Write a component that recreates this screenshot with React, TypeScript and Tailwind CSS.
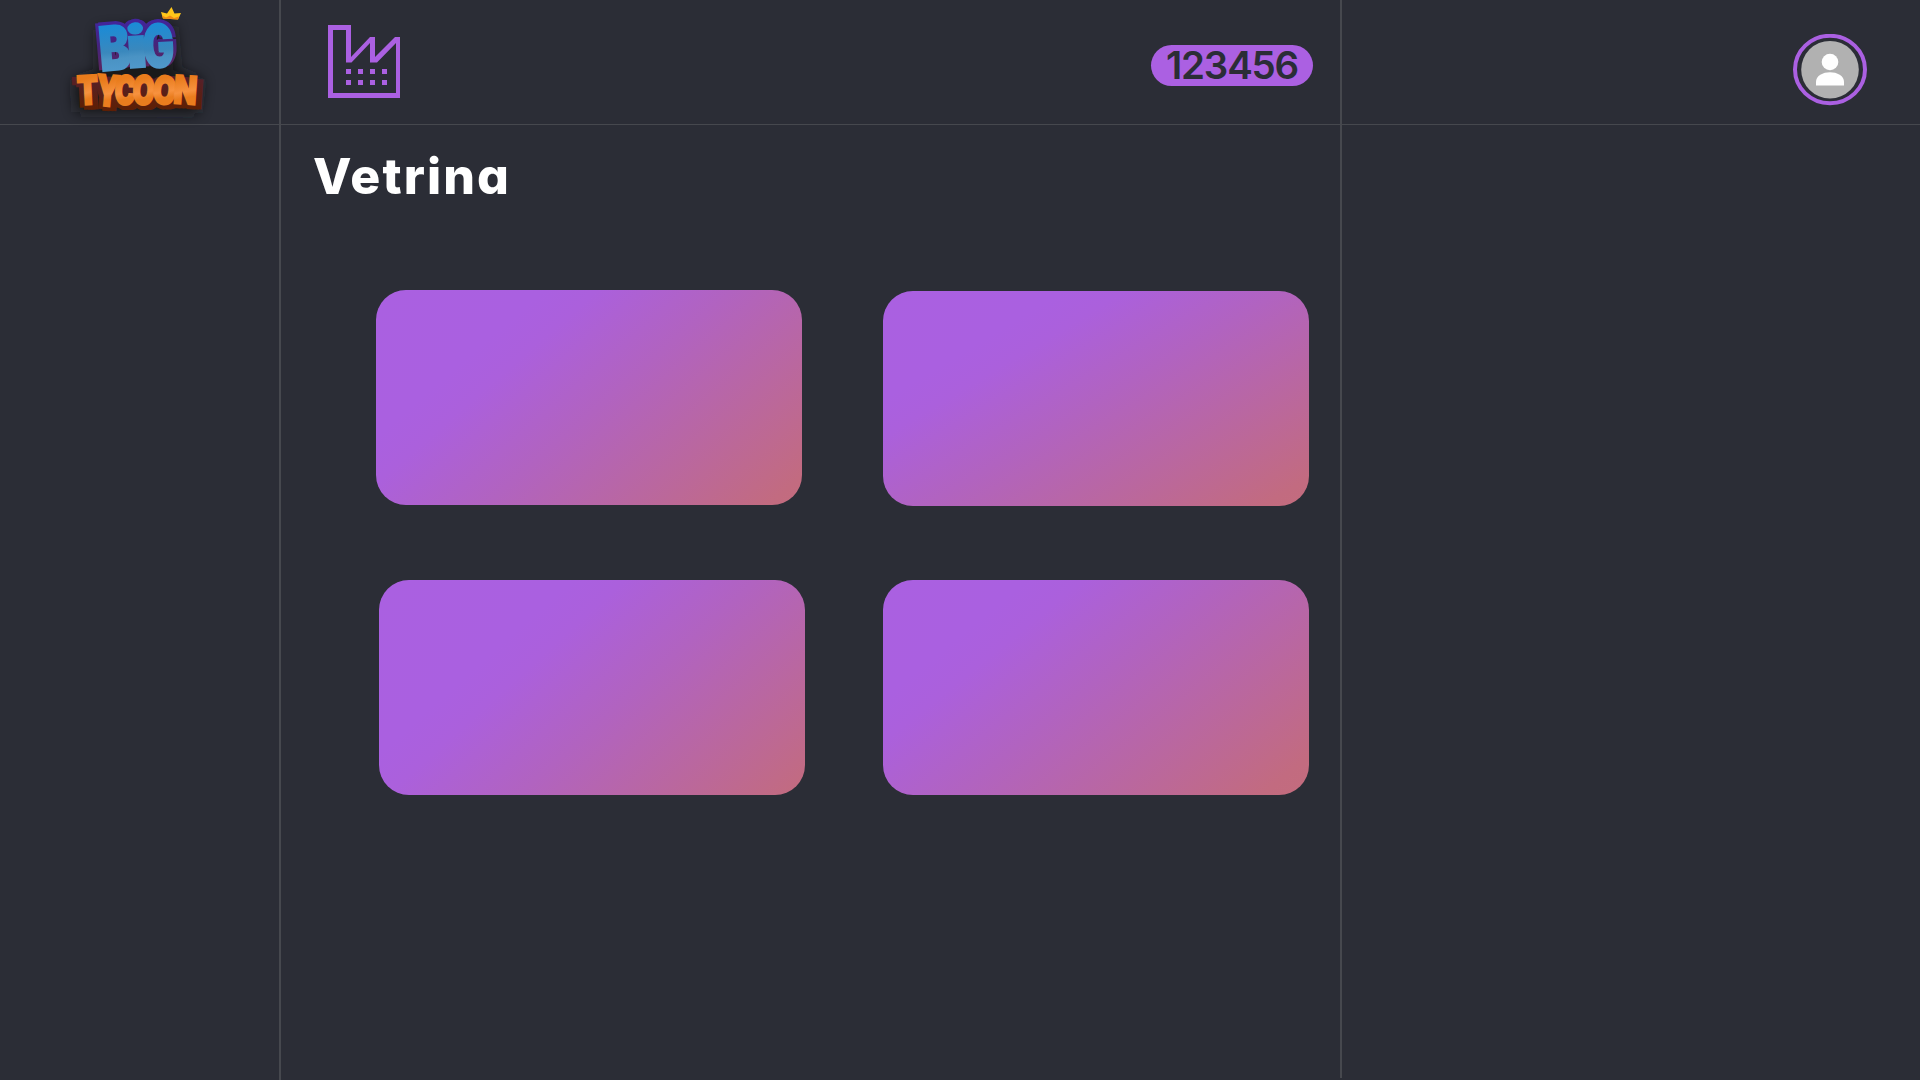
type Glyph = { c: string; x: number; y: number; w: number; h: number; r: number };

const BIG: Glyph[] = [
  { c: "B", x: 101, y: 71, w: 31, h: 44, r: -5 },
  { c: "i", x: 128, y: 68, w: 20, h: 41, r: -4 },
  { c: "G", x: 144, y: 68, w: 31, h: 43, r: -3 },
];

const TYCOON: Glyph[] = [
  { c: "T", x: 78, y: 105, w: 21, h: 29, r: -3 },
  { c: "Y", x: 95, y: 105, w: 23, h: 31, r: 5 },
  { c: "C", x: 114, y: 104, w: 21, h: 29, r: 3 },
  { c: "O", x: 132, y: 104, w: 22, h: 29, r: 3 },
  { c: "O", x: 152, y: 103, w: 23, h: 28, r: 5 },
  { c: "N", x: 173, y: 103, w: 23, h: 28, r: 4 },
];

type WordProps = { glyphs: Glyph[]; paint: string; weight?: number; dx?: number; dy?: number };

function Word({ glyphs, paint, weight = 2, dx = 0, dy = 0 }: WordProps) {
  return (
    <g fontFamily="Inter, sans-serif" fontWeight={900} fill={paint} stroke={paint} strokeWidth={weight}>
      {glyphs.map((g, i) => (
        <text
          key={i}
          transform={`translate(${g.x + dx} ${g.y + dy}) rotate(${g.r})`}
          fontSize={g.h / 0.727}
          textLength={g.w}
          lengthAdjust="spacingAndGlyphs"
        >
          {g.c}
        </text>
      ))}
    </g>
  );
}

function Logo() {
  return (
    <svg width="279" height="124" viewBox="0 0 279 124" className="block overflow-visible">
      <defs>
        <linearGradient id="blue" gradientUnits="userSpaceOnUse" x1="0" y1="-44" x2="0" y2="0">
          <stop offset="0" stopColor="#1b8bd6" />
          <stop offset="0.6" stopColor="#3a88bd" />
          <stop offset="0.75" stopColor="#4a93c4" />
          <stop offset="1" stopColor="#4f98ca" />
        </linearGradient>
        <linearGradient id="violet" gradientUnits="userSpaceOnUse" x1="0" y1="-44" x2="0" y2="0">
          <stop offset="0" stopColor="#42259a" />
          <stop offset="0.5" stopColor="#45247c" />
          <stop offset="1" stopColor="#5a2560" />
        </linearGradient>
        <linearGradient id="orange" gradientUnits="userSpaceOnUse" x1="0" y1="-30" x2="8" y2="0">
          <stop offset="0.2" stopColor="#e97c1c" />
          <stop offset="0.65" stopColor="#f7923f" />
          <stop offset="0.85" stopColor="#ea7d1e" />
        </linearGradient>
        <linearGradient id="brown" gradientUnits="userSpaceOnUse" x1="0" y1="-30" x2="0" y2="0">
          <stop offset="0" stopColor="#56202a" />
          <stop offset="1" stopColor="#5e1f05" />
        </linearGradient>
        <filter id="glow" x="-30%" y="-30%" width="160%" height="160%">
          <feGaussianBlur stdDeviation="7" />
        </filter>
      </defs>
      <path
        d="M98 30L174 26L178 70L202 80L198 113L76 112L74 80L98 72Z"
        fill="#121418"
        opacity="0.85"
        filter="url(#glow)"
      />
      <Word glyphs={BIG} paint="url(#violet)" weight={3} dx={-3} dy={-2} />
      <Word glyphs={BIG} paint="url(#violet)" weight={3} dy={-3} />
      <Word glyphs={BIG} paint="url(#violet)" weight={3} dx={3} dy={-2} />
      <Word glyphs={BIG} paint="url(#blue)" weight={2.2} />
      <Word glyphs={TYCOON} paint="url(#brown)" dx={-5} dy={2} />
      <Word glyphs={TYCOON} paint="url(#brown)" dx={-1} dy={4} />
      <Word glyphs={TYCOON} paint="url(#brown)" dx={3} dy={4} />
      <Word glyphs={TYCOON} paint="url(#brown)" dx={6} dy={4} />
      <Word glyphs={TYCOON} paint="url(#orange)" weight={2.2} />
      <path d="M161 12L167 13.5L171.5 7L174.5 13.5L181 13L178 19.5L163 18.5Z" fill="#ffc61a" />
      <path d="M162 15.5L166 17.5L170 15.5L174 18L179 16.5L178 19.5L163 18.5Z" fill="#f08a16" />
    </svg>
  );
}

function FactoryIcon() {
  return (
    <svg width="72" height="73" viewBox="0 0 72 73" className="block" fill="#ab60e2">
      <path
        fillRule="evenodd"
        d="M0 0H23V32L42 12H47V32L67 12H72V73H0ZM5 5V68H68V18L49 37.5H42V18L23.5 37.5H18V5Z"
      />
      {[18, 30, 42, 54].map((x) => (
        <g key={x}>
          <rect x={x} y={44} width={5} height={5} />
          <rect x={x} y={55} width={5} height={5} />
        </g>
      ))}
    </svg>
  );
}

function Avatar() {
  return (
    <svg width="74" height="72" viewBox="0 0 74 72" className="block">
      <ellipse cx="37" cy="35.5" rx="35" ry="33.7" fill="none" stroke="#ab60e2" strokeWidth="4" />
      <circle cx="37" cy="35.7" r="28.8" fill="#b1b1b1" />
      <circle cx="37" cy="28" r="8.3" fill="#fff" />
      <path d="M23 51.5V48C23 41.5 30 38.2 37 38.2S51 41.5 51 48V51.5Z" fill="#fff" />
    </svg>
  );
}

const card = "h-[215px] w-[426px] rounded-[30px]";

export default function App() {
  return (
    <div className="flex h-[1080px] w-[1920px] flex-col overflow-hidden bg-[#2b2d36] font-[Inter,sans-serif]">
      <header className="flex h-[125px] shrink-0 border-b border-[#46484e]">
        <div className="w-[281px] border-r-2 border-[#46484e]">
          <Logo />
        </div>
        <div className="flex w-[1061px] items-start justify-between border-r-2 border-[#46484e] pr-[27px] pl-[47px]">
          <div className="pt-[25px]">
            <FactoryIcon />
          </div>
          <div className="mt-[45px] flex h-[41px] w-[162px] items-center justify-center rounded-full bg-[#ab60e2]">
            <span className="text-[38.5px] leading-none font-semibold tracking-[-1.2px] text-[#2b2d36]">123456</span>
          </div>
        </div>
        <div className="flex flex-1 justify-end pt-[34px] pr-[53px]">
          <Avatar />
        </div>
      </header>
      <div className="flex flex-1">
        <aside className="w-[281px] border-r-2 border-[#46484e]" />
        <main className="mb-[2px] w-[1061px] border-r-2 border-[#46484e]">
          <h1 className="pt-[21px] pb-px pl-[32px] text-[50px] leading-[60px] font-extrabold tracking-[2.1px] text-white [font-feature-settings:'cv11']">
            Vetrina
          </h1>
          <section className="flex flex-col gap-[74px] pt-[83px]">
            <div className="flex gap-[81px] pl-[95px]">
              <div className={`${card} bg-[linear-gradient(139deg,#aa60e1_0%,#aa60e0_25%,#ab60dc_33%,#b163c0_53%,#c26b80_95%,#c36c7d_100%)]`} />
              <div className={`${card} mt-px bg-[linear-gradient(149deg,#aa60e1_0%,#aa60e0_23%,#ab60dc_31%,#b163c0_51%,#c26b80_94%,#c36c7d_100%)]`} />
            </div>
            <div className="flex gap-[78px] pl-[98px]">
              <div className={`${card} bg-[linear-gradient(138deg,#aa60e1_0%,#aa60e0_29%,#ab60dc_37%,#b163c0_57%,#c26b80_98%,#c36c7d_100%)]`} />
              <div className={`${card} bg-[linear-gradient(141deg,#aa60e1_0%,#aa60e0_21%,#ab60dc_29%,#b163c0_49%,#c26b80_93%,#c36c7d_100%)]`} />
            </div>
          </section>
        </main>
        <aside className="flex-1" />
      </div>
    </div>
  );
}
